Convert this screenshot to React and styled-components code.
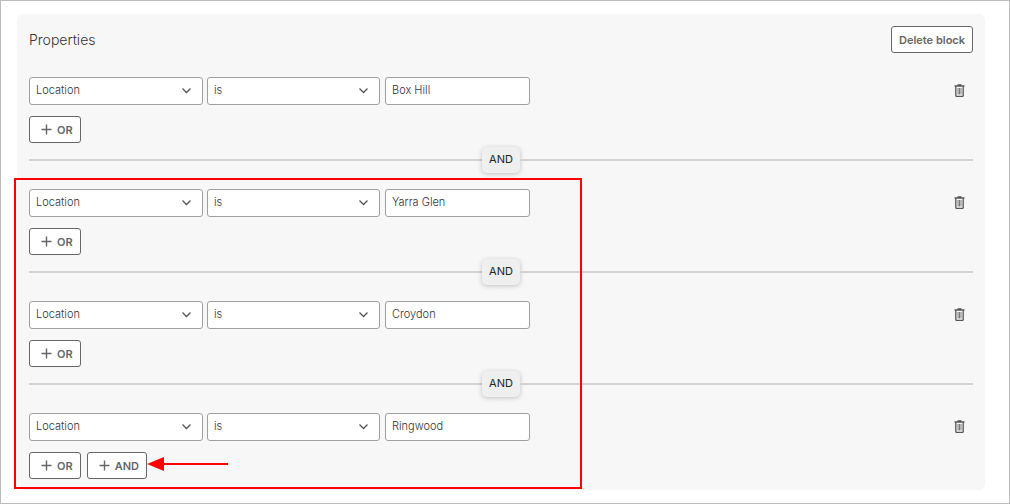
import React from 'react'
import styled, { createGlobalStyle } from 'styled-components';

const colors = {
    panel: '#f7f7f7',
    border: '#a0a0a0',
    button: '#666666',
    text: '#333333',
    line: '#d2d2d2',
    highlight: '#ff0000',
};

const GlobalStyle = createGlobalStyle`
    *, *::before, *::after {
        box-sizing: border-box;
    }
    body {
        margin: 0;
        background: #ffffff;
        color: ${colors.text};
        font-family: Inter, "Liberation Sans", sans-serif;
        font-size: 11px;
        line-height: 16px;
    }
    button, input, select {
        font: inherit;
        color: inherit;
    }
`;

const Page = styled.main`
    min-height: 100vh;
    padding: 13px 24px 12px 16px;
    border: 1px solid #bdbdbd;
`;

const Panel = styled.section`
    padding: 12px 12px 11px;
    border-radius: 6px;
    background: ${colors.panel};
`;

const PanelHeader = styled.header`
    display: flex;
    align-items: center;
    justify-content: space-between;
    margin-bottom: 24px;
`;

const Title = styled.h2`
    margin: 0;
    font-size: 14px;
    font-weight: 300;
`;

const Button = styled.button`
    display: inline-flex;
    align-items: center;
    gap: 5px;
    height: 27px;
    padding: ${props => props.$icon ? '0 7px 0 11px' : '0 7px'};
    border: 1px solid ${colors.button};
    border-radius: 3px;
    background: #ffffff;
    color: ${colors.button};
    font-weight: 600;
    white-space: nowrap;
    cursor: pointer;
`;

const Rule = styled.div`
    display: flex;
    align-items: center;
    height: 28px;
    margin-bottom: 11px;
`;

const SelectWrapper = styled.div`
    display: grid;
    flex: 0 1 ${props => props.$width}px;
    align-items: center;
    margin-right: ${props => props.$gap}px;

    > * {
        grid-area: 1 / 1;
    }
    svg {
        justify-self: end;
        margin-right: 11px;
        pointer-events: none;
    }
`;

const fieldStyle = `
    width: 100%;
    height: 28px;
    padding: 0 6px 2px;
    border: 1px solid ${colors.border};
    border-radius: 3px;
    background: #ffffff;
    font-weight: 300;
`;

const Select = styled.select`
    ${fieldStyle}
    appearance: none;
`;

const ValueInput = styled.input`
    ${fieldStyle}
    flex: 0 1 145px;
    min-width: 0;
`;

const TrashButton = styled.button`
    display: flex;
    margin-left: auto;
    padding: 8px;
    border: 0;
    background: none;
    color: #555555;
    cursor: pointer;
`;

const Actions = styled.div`
    display: flex;
    gap: 6px;
`;

const Divider = styled.div`
    display: flex;
    align-items: center;
    margin: 4px 0 16px;

    &::before, &::after {
        content: '';
        flex: 1;
        height: 2px;
        background: ${colors.line};
    }
`;

const Badge = styled.span`
    width: 38px;
    padding: 4px 0 6px;
    border-radius: 5px;
    background: #efefef;
    box-shadow: 0 1px 5px rgba(0, 0, 0, 0.22);
    color: #222222;
    text-align: center;
`;

const Highlighted = styled.div`
    position: relative;

    &::after {
        content: '';
        position: absolute;
        top: -11px;
        bottom: -10px;
        left: -15px;
        width: 568px;
        border: 2px solid ${colors.highlight};
        pointer-events: none;
    }
`;

const Pointed = styled.div`
    position: relative;

    > svg {
        position: absolute;
        top: 4px;
        left: 100%;
    }
`;

const Chevron = () => (
    <svg width="11" height="8" viewBox="0 0 11 8" fill="none" stroke="#555555" strokeWidth="1.3" aria-hidden="true">
        <path d="M1.5 1.5 5.5 5.5l4-4" />
    </svg>
)

const Plus = () => (
    <svg width="11" height="11" viewBox="0 0 11 11" fill="none" stroke="currentColor" strokeWidth="1.4" aria-hidden="true">
        <path d="M5.5.5v10M.5 5.5h10" />
    </svg>
)

const Trash = () => (
    <svg width="11" height="14" viewBox="0 0 11 14" fill="none" stroke="currentColor" aria-hidden="true">
        <path d="M.5 2h10M3.5 1h4" strokeWidth="1.3" />
        <path d="M1.8 2.5v9q0 .9.9.9h5.6q.9 0 .9-.9v-9" strokeWidth="1.3" />
        <path d="M4 4v6.5M5.5 4v6.5M7 4v6.5" strokeWidth=".8" />
    </svg>
)

const Arrow = () => (
    <svg width="81" height="16" viewBox="0 0 81 16" fill={colors.highlight} aria-hidden="true">
        <path d="M0 8 17 1v14z" />
        <path d="M16 7h65v2H16z" />
    </svg>
)

const Dropdown = ({ label, value, width, gap }) => (
    <SelectWrapper $width={width} $gap={gap}>
        <Select aria-label={label} defaultValue={value}>
            <option>{value}</option>
        </Select>
        <Chevron />
    </SelectWrapper>
)

const Condition = ({ value, last }) => (
    <div>
        <Rule>
            <Dropdown label="Property" value="Location" width={174} gap={4} />
            <Dropdown label="Operator" value="is" width={173} gap={5} />
            <ValueInput aria-label="Value" type="text" defaultValue={value} />
            <TrashButton type="button" aria-label="Delete condition"><Trash /></TrashButton>
        </Rule>
        <Actions>
            <Button type="button" $icon><Plus />OR</Button>
            {last && (
                <Pointed>
                    <Button type="button" $icon><Plus />AND</Button>
                    <Arrow />
                </Pointed>
            )}
        </Actions>
        {!last && <Divider><Badge>AND</Badge></Divider>}
    </div>
)

const App = () => (
    <Page>
        <GlobalStyle />
        <Panel>
            <PanelHeader>
                <Title>Properties</Title>
                <Button type="button">Delete block</Button>
            </PanelHeader>
            <Condition value="Box Hill" />
            <Highlighted>
                <Condition value="Yarra Glen" />
                <Condition value="Croydon" />
                <Condition value="Ringwood" last />
            </Highlighted>
        </Panel>
    </Page>
)

export default App;
